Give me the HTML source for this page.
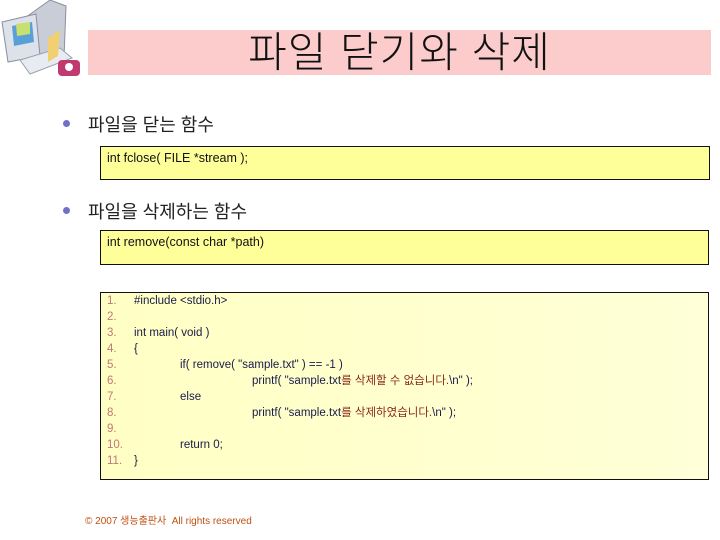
<!DOCTYPE html>
<html><head><meta charset="utf-8"><style>
body{margin:0;width:720px;height:540px;background:#fff;position:relative;overflow:hidden;font-family:"Liberation Sans","Noto Sans CJK KR",sans-serif;}
.a{position:absolute;white-space:pre;}
.bar{position:absolute;left:88px;top:30px;width:623px;height:45px;background:#fccccc;}
.title{position:absolute;left:88px;width:623px;top:25px;text-align:center;font-size:42px;line-height:56px;color:#111;font-weight:300;letter-spacing:1px;}
.dot{position:absolute;width:7px;height:7px;border-radius:50%;background:#7070c8;}
.bt{font-size:18px;color:#222;}
.box{position:absolute;border:1.5px solid #111;background:#ffff99;box-sizing:border-box;}
.code{font-size:11.5px;line-height:16px;color:#1a1a4a;}
.n{color:#c07878;}
.k{color:#8a2a1a;}
</style></head><body>
<svg style="position:absolute;left:0;top:0" width="86" height="80" viewBox="0 0 86 80">
<polygon points="22,20 50,0 66,6 64,58 38,70" fill="#c8cdd8" stroke="#8a8fa0" stroke-width="1"/>
<polygon points="2,22 36,14 40,56 8,62" fill="#dde2ea" stroke="#8a8fa0"/>
<polygon points="12,26 32,22 34,42 14,46" fill="#5aa0d8"/>
<polygon points="16,24 30,22 30,34 17,36" fill="#c8e070"/>
<polygon points="20,60 60,48 72,58 30,74" fill="#e8ecf2" stroke="#9aa0b0"/>
<polygon points="48,38 60,30 58,56 48,62" fill="#f0d070"/>
<rect x="58" y="60" width="22" height="16" rx="4" fill="#c03a70"/>
<circle cx="69" cy="67" r="4" fill="#fff"/>
</svg>
<div class="bar"></div>
<div class="a title">파일 닫기와 삭제</div>
<div class="dot" style="left:63px;top:120px"></div>
<div class="a bt" style="left:88px;top:111px">파일을 닫는 함수</div>
<div class="box" style="left:100px;top:146px;width:610px;height:34px"></div>
<div class="a code" style="left:107px;top:150px;font-size:12.5px;color:#111">int fclose( FILE *stream );</div>
<div class="dot" style="left:63px;top:207px"></div>
<div class="a bt" style="left:88px;top:198px">파일을 삭제하는 함수</div>
<div class="box" style="left:100px;top:230px;width:609px;height:35px"></div>
<div class="a code" style="left:107px;top:234px;font-size:12.5px;color:#111">int remove(const char *path)</div>
<div class="box" style="left:100px;top:292px;width:609px;height:188px;background:linear-gradient(90deg,#ffffc4,#ffffd8);"></div>
<div class="a code n" style="left:107px;top:293px">1.
2.
3.
4.
5.
6.
7.
8.
9.
10.
11.</div>
<div class="a code" style="left:134px;top:293px">#include &lt;stdio.h&gt;

int main( void )
{</div>
<div class="a code" style="left:180px;top:357px">if( remove( "sample.txt" ) == -1 )</div>
<div class="a code" style="left:252px;top:373px">printf( "sample.txt<span class="k">를 삭제할 수 없습니다.</span>\n" );</div>
<div class="a code" style="left:180px;top:389px">else</div>
<div class="a code" style="left:252px;top:405px">printf( "sample.txt<span class="k">를 삭제하였습니다.</span>\n" );</div>
<div class="a code" style="left:180px;top:437px">return 0;</div>
<div class="a code" style="left:134px;top:453px">}</div>
<div class="a" style="left:85px;top:512px;font-size:10px;color:#c05010">© 2007 생능출판사  All rights reserved</div>
</body></html>
